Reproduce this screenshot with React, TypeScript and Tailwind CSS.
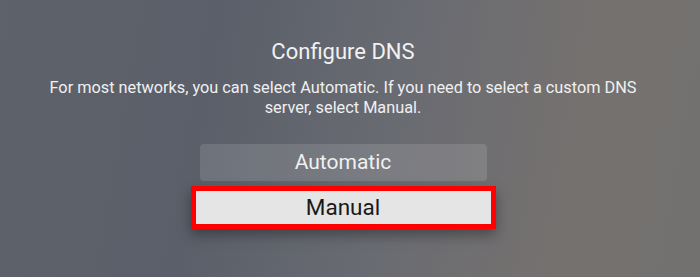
export default function App() {
  return (
    <div
      className="w-[700px] h-[277px] overflow-hidden flex flex-col items-center pr-[14px] bg-[linear-gradient(100deg,#5e626a_0%,#5a5f69_30%,#696b72_55%,#75716f_80%,#73716f_100%)] text-white"
      style={{ fontFamily: "Roboto, 'Noto Sans', sans-serif" }}
    >
      <h1 className="mt-[39px] text-[22px] leading-[26px] font-normal text-[#f2f2f2]">
        Configure DNS
      </h1>
      <p className="mt-[13px] w-[600px] text-center text-[16.3px] leading-[20px] text-[#f0f0f0]">
        For most networks, you can select Automatic. If you need to select a custom DNS server, select Manual.
      </p>
      <div className="mt-[26px] flex flex-col items-center">
        <div className="w-[287px] h-[37px] rounded-[4px] bg-white/[0.12] flex items-center justify-center text-[21px] text-[#f0f0f0]">
          Automatic
        </div>
        <div className="mt-[5px] w-[305px] h-[43px] border-[5px] border-[#ff0000] bg-[#e5e5e5] flex items-center justify-center text-[22.5px] text-[#1a1a1a] shadow-[0_6px_12px_rgba(0,0,0,0.35)]">
          Manual
        </div>
      </div>
    </div>
  );
}
